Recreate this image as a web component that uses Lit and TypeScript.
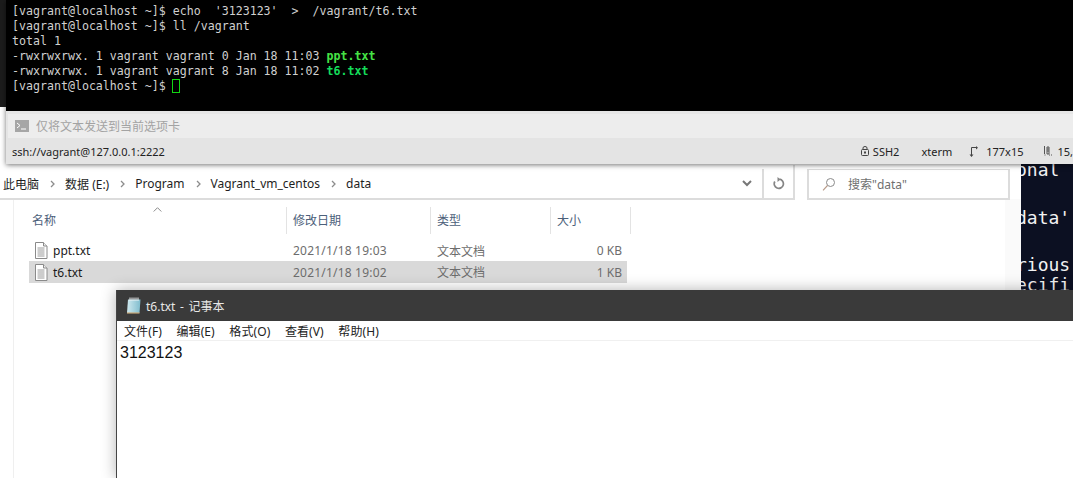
import { LitElement, html, css } from "lit";
import { customElement } from "lit/decorators.js";

const fileIcon = html`<svg width="14" height="17" viewBox="0 0 14 17" class="ficon">
  <path d="M1.5.5h8l3.5 3.500v12.500h-11.500z" fill="#fff" stroke="#8a8a8a"/>
  <path d="M9.500.5v3.500h3.500" fill="#eee" stroke="#8a8a8a"/>
  <path d="M3.500 6h7M3.500 8h7M3.500 10h7M3.500 12h7M3.500 14h7" stroke="#9a9a9a"/>
</svg>`;

const chev = html`<svg class="sep" width="5" height="8" viewBox="0 0 5 8"><path d="M1 1l3 3-3 3" fill="none" stroke="#8c8c8c" stroke-width="1.300"/></svg>`;

@customElement("app-root")
export class AppRoot extends LitElement {
  static styles = css`
    :host { display: block; width: 1073px; height: 478px; position: relative; overflow: hidden; background: #fff; font-family: "Noto Sans", "Noto Sans CJK SC", sans-serif; }
    .desk { position: absolute; left: 0; top: 0; width: 6px; height: 107px; background: #1c1c1c; }
    .back { position: absolute; left: 1021px; top: 160px; width: 52px; height: 135px; background: #0c1022; color: #f2f2f2; font: 18px/1 "DejaVu Sans Mono", monospace; overflow: hidden; }
    .back div { position: absolute; left: -5px; white-space: pre; }
    .l1 { top: 1px; } .l2 { top: 49px; } .l3 { top: 96px; } .l4 { top: 116px; }

    .explorer { position: absolute; left: 0; top: 165px; width: 1021px; height: 313px; background: linear-gradient(90deg, #fff 1005px, #fafafa 1005px); display: flex; flex-direction: column; }
    .addr { height: 34px; display: flex; align-items: stretch; flex: none; background: #fff; }
    .crumbs { width: 795px; flex: none; box-sizing: border-box; height: 35px; padding: 4px 0 0 3px; border-bottom: 2px solid #dcdcdc; border-right: 2px solid #dcdcdc; display: flex; align-items: center; font-size: 12px; color: #1e1e1e; position: relative; }
    .crumbs span { white-space: nowrap; }
    .sep { margin: 0 10px 0 11px; flex: none; }
    .tools { margin-left: auto; display: flex; align-items: center; height: 100%; }
    .dd { width: 30px; display: flex; justify-content: center; }
    .refresh { width: 31px; height: 100%; border-left: 2px solid #dcdcdc; display: flex; align-items: center; justify-content: center; box-sizing: border-box; }
    .search { margin: 4px 0 0 12px; width: 203px; height: 31px; box-sizing: border-box; border: 2px solid #dcdcdc; border-top-width: 1px; display: flex; align-items: center; padding-left: 13px; gap: 12px; font-size: 12px; color: #6f6f6f; }
    .list { flex: 1; margin-left: 13px; border-left: 1px solid #efefef; padding: 8px 0 0 15px; }
    .grid { display: grid; grid-template-columns: 258px 144px 120px 76px; width: 598px; font-size: 12px; }
    .head { grid-template-columns: 258px 144px 120px 80px; width: 602px; height: 27px; color: #4c607a; position: relative; }
    .head > div { height: 27px; line-height: 28px; padding-left: 3px; border-right: 1px solid #e3e3e3; box-sizing: border-box; }
    .head > div + div { padding-left: 6px; }
    .sort { position: absolute; left: 124px; top: 0; }
    .rows { margin-top: 6px; }
    .row { height: 21px; align-items: center; color: #6d6d6d; }
    .row > div { padding-left: 6px; white-space: nowrap; }
    .date { letter-spacing: .2px; }
    .row > .name { padding-left: 5px; color: #1a1a1a; display: flex; align-items: center; gap: 5px; }
    .row > .size { text-align: right; padding: 0 5px 0 0; }
    .sel { background: #d9d9d9; height: 22px; }
    .ficon { flex: none; }

    .term { position: absolute; left: 6px; top: 0; width: 1067px; height: 164px; background: #e4e4e4; box-shadow: 0 1px 5px rgba(0,0,0,.55); display: flex; flex-direction: column; }
    .screen { height: 111px; background: #000; flex: none; box-sizing: border-box; padding: 4px 0 0 6px; color: #d0d0d0; font: 11.620px/15px "DejaVu Sans Mono", monospace; }
    .screen div { white-space: pre; height: 15px; }
    .g1 { color: #46e346; font-weight: bold; }
    .g2 { color: #14dc5a; font-weight: bold; }
    .cursor { display: inline-block; width: 6px; height: 12px; border: 1px solid #12d512; vertical-align: -3px; margin-left: -1px; }
    .input { height: 27px; flex: none; box-sizing: border-box; border-left: 2px solid #e4e4e4; background: #ededed; border-top: 3px solid #e6e6e6; display: flex; align-items: center; padding-left: 7px; gap: 7px; font-size: 12px; color: #a3a3a3; }
    .prompt { width: 14px; height: 12px; display: block; flex: none; }
    .status { flex: 1; display: flex; align-items: center; padding-left: 6px; font-size: 11px; color: #222; white-space: nowrap; }
    .status span { display: inline-flex; align-items: center; }
    .s-ssh { margin-left: 696px; gap: 4px; }
    .s-x { margin-left: 22px; }
    .s-size { margin-left: 17px; gap: 8px; }
    .s-pos { margin-left: 20px; gap: 5px; }

    .note { position: absolute; left: 116px; top: 290px; width: 957px; height: 188px; background: #fff; border-left: 1px solid #444; box-sizing: border-box; box-shadow: 0 0 14px rgba(0,0,0,.3); display: flex; flex-direction: column; }
    .title { height: 31px; flex: none; background: #3a3a3a; color: #e8e8e8; display: flex; align-items: center; padding-left: 9px; gap: 5px; font-size: 12px; word-spacing: 1.500px; }
    .menu { height: 19px; flex: none; display: flex; align-items: center; padding-left: 7px; font-size: 12px; color: #222; gap: 14.500px; letter-spacing: .1px; border-bottom: 1px solid #f0f0f0; }
    .body { font: 16px/20px "Liberation Sans", sans-serif; color: #111; padding: 2px 0 0 3px; }
  `;

  render() {
    return html`
      <div class="desk"></div>
      <div class="back">
        <div class="l1">onal</div><div class="l2">data'</div><div class="l3">rious</div><div class="l4">ecifi</div>
      </div>

      <div class="explorer">
        <div class="addr">
          <div class="crumbs">
            <span>此电脑</span>${chev}<span>数据 (E:)</span>${chev}<span>Program</span>${chev}<span>Vagrant_vm_centos</span>${chev}<span>data</span>
            <div class="tools">
              <div class="dd"><svg width="10" height="7" viewBox="0 0 10 7"><path d="M1 1l4 4 4-4" fill="none" stroke="#777" stroke-width="2"/></svg></div>
              <div class="refresh"><svg width="12" height="13" viewBox="0 0 12 13"><path d="M6.500 2.200a4.600 4.600 0 1 1-4.700 2.300" fill="none" stroke="#858585" stroke-width="1.700"/><path d="M4.500 0v5l3-2.500z" fill="#858585"/></svg></div>
            </div>
          </div>
          <div class="search">
            <svg width="14" height="14" viewBox="0 0 14 14"><circle cx="8.500" cy="5.500" r="4" fill="none" stroke="#8a8a8a"/><path d="M5.500 8.500l-4.500 4.800" stroke="#b89a88" stroke-width="1.100"/></svg>
            <span>搜索"data"</span>
          </div>
        </div>
        <div class="list">
          <div class="grid head">
            <div>名称</div><div>修改日期</div><div>类型</div><div>大小</div>
            <svg class="sort" width="9" height="5" viewBox="0 0 9 5"><path d="M.7 4.500l3.800-3.800 3.800 3.800" fill="none" stroke="#8a8a8a"/></svg>
          </div>
          <div class="rows">
            <div class="grid row"><div class="name">${fileIcon}<span>ppt.txt</span></div><div class="date">2021/1/18 19:03</div><div>文本文档</div><div class="size">0 KB</div></div>
            <div class="grid row sel"><div class="name">${fileIcon}<span>t6.txt</span></div><div class="date">2021/1/18 19:02</div><div>文本文档</div><div class="size">1 KB</div></div>
          </div>
        </div>
      </div>

      <div class="term">
        <div class="screen">
          <div>[vagrant@localhost ~]$ echo  '3123123'  >  /vagrant/t6.txt</div>
          <div>[vagrant@localhost ~]$ ll /vagrant</div>
          <div>total 1</div>
          <div>-rwxrwxrwx. 1 vagrant vagrant 0 Jan 18 11:03 <span class="g1">ppt.txt</span></div>
          <div>-rwxrwxrwx. 1 vagrant vagrant 8 Jan 18 11:02 <span class="g2">t6.txt</span></div>
          <div>[vagrant@localhost ~]$ <span class="cursor"></span></div>
        </div>
        <div class="input">
          <svg class="prompt" viewBox="0 0 14 12"><rect width="14" height="12" fill="#a6a6a6"/><path d="M2 3l3 2.500-3 2.500" fill="none" stroke="#fff"/><path d="M6 9h5" stroke="#fff"/></svg>
          <span>仅将文本发送到当前选项卡</span>
        </div>
        <div class="status">
          <span>ssh://vagrant@127.0.0.1:2222</span>
          <span class="s-ssh"><svg width="8" height="10" viewBox="0 0 8 10"><rect x=".5" y="3.500" width="7" height="6" rx="1" fill="none" stroke="#444"/><path d="M2 3.500V2a2 1.500 0 0 1 4 0v1.500" fill="none" stroke="#444"/><rect x="3" y="5.500" width="2" height="2" fill="#444"/></svg>SSH2</span>
          <span class="s-x">xterm</span>
          <span class="s-size"><svg width="9" height="11" viewBox="0 0 9 11"><path d="M2.500 1.500v8M2.500 1.500h5" fill="none" stroke="#444"/><path d="M.5 8.500h4l-2 2.500zM7 0v3.500l2-1.750z" fill="#444"/></svg>177x15</span>
          <span class="s-pos"><svg width="9" height="10" viewBox="0 0 9 10"><path d="M.5 0v8M3 1h2v7H3zM3 3h2M3 5h2M7 9h1M5 9h1M.5 9h1" fill="none" stroke="#555"/></svg>15,</span>
        </div>
      </div>

      <div class="note">
        <div class="title">
          <svg width="15" height="17" viewBox="0 0 15 17">
            <defs><linearGradient id="pad" x1="0" y1="0" x2="1" y2="0"><stop offset="0" stop-color="#cfe9ef"/><stop offset="1" stop-color="#7fbccd"/></linearGradient></defs>
            <path d="M2 2.500h12.500l-1 13.500h-12.500z" fill="url(#pad)"/>
            <path d="M1 16h12.500" stroke="#c9a878" stroke-width="1.200"/>
            <path d="M4 .5v3.500M6 .5v3.500M8 .5v3.500M10 .5v3.500M12 .5v3.500" stroke="#f2f6f8"/>
          </svg>
          <span>t6.txt - 记事本</span>
        </div>
        <div class="menu"><span>文件(F)</span><span>编辑(E)</span><span>格式(O)</span><span>查看(V)</span><span>帮助(H)</span></div>
        <div class="body">3123123</div>
      </div>
    `;
  }
}
